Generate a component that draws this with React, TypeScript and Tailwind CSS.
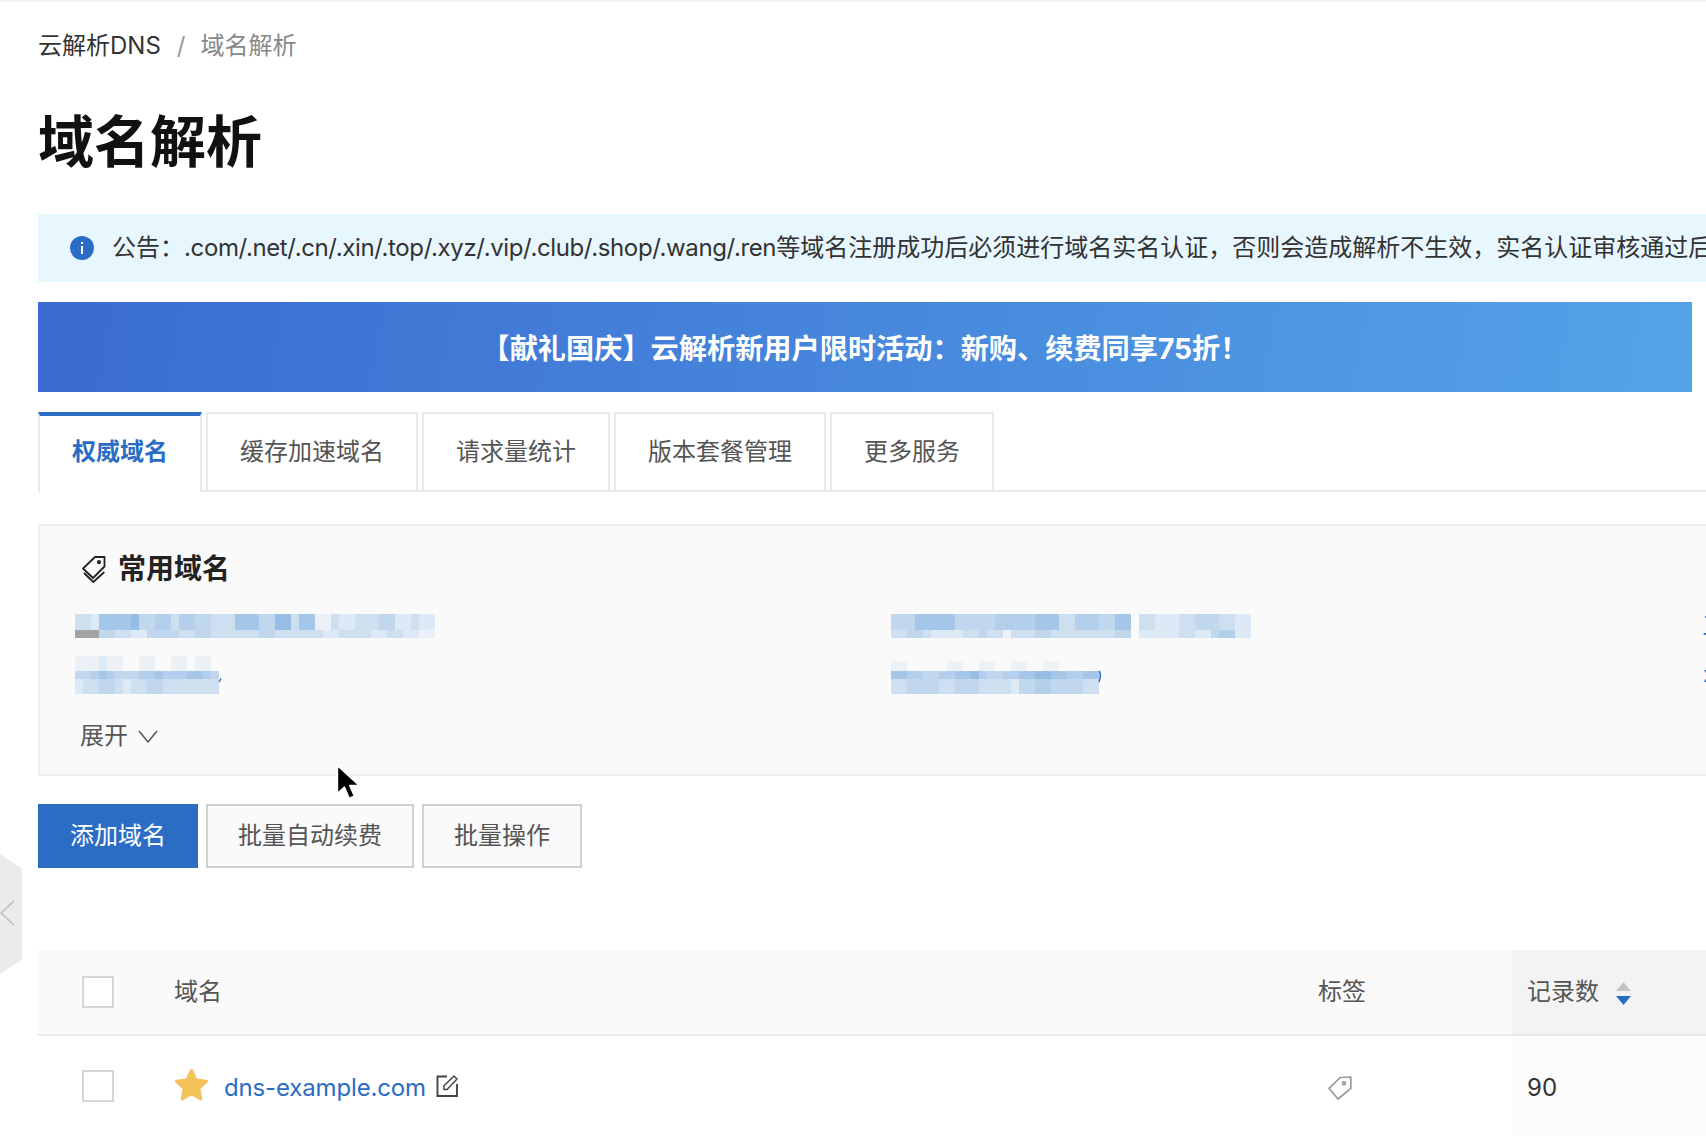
const tabs = ["权威域名", "缓存加速域名", "请求量统计", "版本套餐管理", "更多服务"];

type Band = { h: number; cells: string };

// pixelated blur over the hidden domain names
function Mosaic({ bands, children }: { bands: Band[]; children?: React.ReactNode }) {
  const width = Math.max(...bands.map((b) => b.cells.length)) * 8;
  const height = bands.reduce((sum, b) => sum + b.h, 0);
  let y = 0;
  return (
    <svg width={width + 8} height={height} className="block">
      {bands.map((band) => {
        const top = y;
        y += band.h;
        return band.cells.split("").map((c, i) => (
          <rect
            key={`${top}-${i}`}
            x={i * 8}
            y={top}
            width={8}
            height={band.h}
            fill={c === "g" ? "#a3a3a3" : "#6ba3dc"}
            fillOpacity={c === "g" ? 1 : Number(c) / 10}
          />
        ));
      })}
      {children}
    </svg>
  );
}

function Checkbox() {
  return <div className="h-[32px] w-[32px] border-2 border-[#d6d6d6] bg-white" />;
}

function StackedTag() {
  return (
    <svg width="24" height="27" viewBox="0 0 24 27" fill="none" stroke="#222" strokeWidth="1.8" strokeLinejoin="round">
      <path d="M1 12.5 13 1h9.5v9.5L11 22z" />
      <circle cx="17" cy="6.2" r="1.2" />
      <path d="m2 17 9.3 9 11-10" />
    </svg>
  );
}

function RowTag() {
  return (
    <svg width="24" height="24" viewBox="0 0 24 24" fill="none" stroke="#999" strokeWidth="1.7" strokeLinejoin="round">
      <path d="M1 12.3 12.3 1.5l10.5-.5v11.3L10 23z" />
      <circle cx="16" cy="7.3" r="1.5" />
    </svg>
  );
}

function EditIcon() {
  return (
    <svg width="24" height="24" viewBox="0 0 24 24" fill="none" stroke="#444" strokeWidth="1.9">
      <path d="M12 2.5H2.5v19.5h19.5V10" />
      <path d="M9 15.5v-3.7L19 2l3 3-10 10.5z" strokeWidth="1.5" strokeLinejoin="round" />
    </svg>
  );
}

function App() {
  return (
    <div className="relative h-[1136px] w-[1706px] overflow-hidden border-t-2 border-[#f2f2f2] bg-white pl-[38px] font-['Inter','Noto_Sans_CJK_SC',sans-serif] text-[24px] text-[#333]">
      <div className="mt-[27px] flex h-[34px] items-center">
        <span>云解析DNS</span>
        <span className="ml-[16px] text-[#999]">/</span>
        <span className="ml-[15px] text-[#888]">域名解析</span>
      </div>

      <h1 className="mt-[47px] h-[64px] text-[56px] leading-[64px] font-bold text-[#111]">域名解析</h1>

      <div className="mt-[40px] flex h-[68px] w-[1680px] items-center gap-[18px] bg-[#e8f6fe] pl-[32px]">
        <svg width="24" height="24" viewBox="0 0 24 24" className="shrink-0">
          <circle cx="12" cy="12" r="12" fill="#2b6cc4" />
          <rect x="11" y="10" width="2" height="8" fill="#fff" />
          <rect x="11" y="6" width="2" height="2" fill="#fff" />
        </svg>
        <span className="whitespace-nowrap">
          公告：<span className="tracking-[-0.37px]">.com/.net/.cn/.xin/.top/.xyz/.vip/.club/.shop/.wang/.ren</span>
          等域名注册成功后必须进行域名实名认证，否则会造成解析不生效，实名认证审核通过后方可正常解析
        </span>
      </div>

      <div className="mt-[20px] flex h-[90px] w-[1654px] items-center justify-center bg-[linear-gradient(100deg,#3a6bd0,#54a3e8)] pt-[4px] text-[28.2px] font-bold text-white">
        【献礼国庆】云解析新用户限时活动：新购、续费同享75折！
      </div>

      <div className="mt-[20px] flex h-[80px] gap-[4px] border-b-2 border-[#e8ebee]">
        {tabs.map((tab, i) => (
          <div
            key={tab}
            className={
              i === 0
                ? "z-10 -mb-[2px] flex h-[80px] items-center border-x-2 border-t-4 border-x-[#e8ebee] border-t-[#2b6cc4] bg-white px-[32px] pb-[4px] font-semibold text-[#2b6cc4]"
                : "flex items-center border-x-2 border-t-2 border-[#e8ebee] px-[32px] text-[#555]"
            }
          >
            {tab}
          </div>
        ))}
      </div>

      <div className="mt-[32px] h-[252px] w-[1700px] border-2 border-[#eeeeee] bg-[#fafafa] pl-[35px]">
        <div className="mt-[28px] flex h-[30px] items-center gap-[12px] pl-[7px]">
          <StackedTag />
          <span className="text-[28px] font-semibold text-[#222]">常用域名</span>
        </div>

        <div className="mt-[30px] grid grid-cols-[816px_812px_814px] items-end gap-y-[18px]">
          <Mosaic
            bands={[
              { h: 16, cells: "332666674455355443336664477366113223334422322" },
              { h: 8, cells: "ggg443322444433443333334433333322333322332211" },
            ]}
          />
          <Mosaic
            bands={[
              { h: 16, cells: "444666664444455555666335554466033222334443322" },
              { h: 8, cells: "334432222334331333443333333344022222332245522" },
            ]}
          />
          <span className="-ml-[1px] leading-[24px] text-[#2b6cc4]">三</span>
          <Mosaic
            bands={[
              { h: 15, cells: "111211001100110110" },
              { h: 8, cells: "445654445565556654" },
              { h: 15, cells: "233443233443333333" },
            ]}
          >
            <path d="M146 22.5l-2 3.5" stroke="#2b6cc4" strokeWidth="1.5" />
          </Mosaic>
          <Mosaic
            bands={[
              { h: 10, cells: "11000001100110011001100000" },
              { h: 8, cells: "66554455667544556677665566" },
              { h: 15, cells: "33444433444333324455444433" },
            ]}
          >
            <path d="M208 10q3 3 0 11" fill="none" stroke="#2b6cc4" strokeWidth="1.5" />
          </Mosaic>
          <span className="mb-[8px] text-[22px] leading-[24px] text-[#2b6cc4]">x</span>
        </div>

        <div className="mt-[27px] flex h-[30px] items-center gap-[10px] pl-[5px] text-[#555]">
          <span>展开</span>
          <svg width="20" height="13" viewBox="0 0 20 13" fill="none" stroke="#555" strokeWidth="1.5">
            <path d="M1 1l9 11 9-11" />
          </svg>
        </div>
      </div>

      <div className="mt-[28px] flex h-[64px] gap-[8px]">
        <button className="w-[160px] bg-[#2b6cc4] text-white">添加域名</button>
        <button className="w-[208px] border-2 border-[#d0d0d0] bg-[#fafafa] text-[#555]">批量自动续费</button>
        <button className="w-[160px] border-2 border-[#d0d0d0] bg-[#fafafa] text-[#555]">批量操作</button>
      </div>

      <div className="mt-[82px] w-[1668px]">
        <div className="grid h-[86px] grid-cols-[136px_1144px_194px_1fr] border-b-2 border-[#e8ebef] bg-[#fafafa] text-[#555]">
          <div className="flex items-center pl-[44px]">
            <Checkbox />
          </div>
          <div className="flex items-center">域名</div>
          <div className="flex items-center">标签</div>
          <div className="flex items-center gap-[17px] bg-[#f3f3f4] pl-[15px]">
            <span>记录数</span>
            <svg width="15" height="23" viewBox="0 0 15 23" className="mt-[2px]">
              <path d="M7.5 0 15 9H0z" fill="#c4c4c4" />
              <path d="M7.5 23 15 14H0z" fill="#2b6cc4" />
            </svg>
          </div>
        </div>
        <div className="grid h-[100px] grid-cols-[136px_1144px_194px_1fr]">
          <div className="flex items-center pl-[44px]">
            <Checkbox />
          </div>
          <div className="flex items-center">
            <svg width="35" height="33" viewBox="0 0 35 33" className="mb-[4px]">
              <path
                d="M17.5 2.5 22 12l10.5 1.3-7.7 7.2 2 10.4-9.3-5.2-9.3 5.2 2-10.4-7.7-7.2L13 12z"
                fill="#f5c15a"
                stroke="#f5c15a"
                strokeWidth="3"
                strokeLinejoin="round"
              />
            </svg>
            <a className="mt-[3px] ml-[15px] tracking-[-0.15px] text-[#2b6cc4]">dns-example.com</a>
            <span className="ml-[9px]">
              <EditIcon />
            </span>
          </div>
          <div className="flex items-center pt-[3px] pl-[10px]">
            <RowTag />
          </div>
          <div className="flex items-center bg-[#fbfbfb] pt-[3px] pl-[15px]">90</div>
        </div>
      </div>

      {/* sidebar collapse handle */}
      <div className="absolute top-[852px] left-0 flex h-[120px] w-[22px] items-center bg-[#ebebeb] [clip-path:polygon(0_0,100%_12%,100%_88%,0_100%)]">
        <svg width="14" height="26" viewBox="0 0 14 26" fill="none" stroke="#bdbdbd" strokeWidth="1.5" className="-mt-[2px]">
          <path d="M14 1 1 13l13 12" />
        </svg>
      </div>

      {/* mouse pointer */}
      <svg width="26" height="39" viewBox="0 0 22 33" className="absolute top-[761px] left-[335px]">
        <path d="M2 2v24l6-5.500 4 9.500 4.500-2-4-9h8z" fill="#000" stroke="#fff" strokeWidth="1.4" strokeLinejoin="round" />
      </svg>
    </div>
  );
}

export default App;
